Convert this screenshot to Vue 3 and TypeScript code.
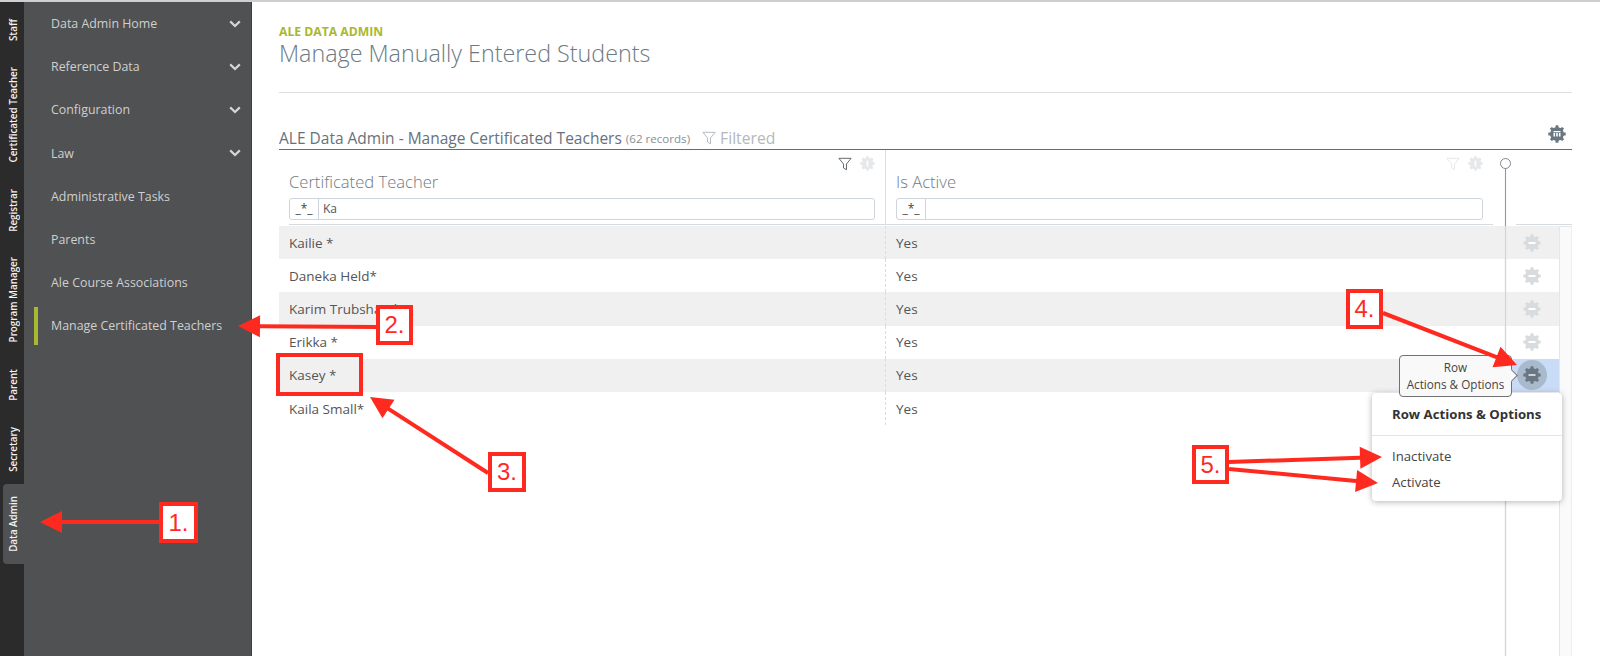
<script setup lang="ts">
const railItems = ['Staff', 'Certificated Teacher', 'Registrar', 'Program Manager', 'Parent', 'Secretary', 'Data Admin']
const navItems = [
  { label: 'Data Admin Home', more: true },
  { label: 'Reference Data', more: true },
  { label: 'Configuration', more: true },
  { label: 'Law', more: true },
  { label: 'Administrative Tasks', more: false },
  { label: 'Parents', more: false },
  { label: 'Ale Course Associations', more: false },
  { label: 'Manage Certificated Teachers', more: false, current: true },
]
const rows = [
  { name: 'Kailie *', active: 'Yes' },
  { name: 'Daneka Held*', active: 'Yes' },
  { name: 'Karim Trubshaw*', active: 'Yes' },
  { name: 'Erikka *', active: 'Yes' },
  { name: 'Kasey *', active: 'Yes', selected: true },
  { name: 'Kaila Small*', active: 'Yes' },
]

function makeGear(): string {
  const pts: string[] = []
  const teeth = 8
  for (let i = 0; i < teeth; i++) {
    const a = (i / teeth) * Math.PI * 2
    const step = (Math.PI * 2) / teeth
    const list: [number, number][] = [
      [6.8, a - step * 0.5],
      [7, a - step * 0.28],
      [8.8, a - step * 0.2],
      [8.8, a + step * 0.2],
      [7, a + step * 0.28],
    ]
    for (const [r, t] of list) {
      pts.push(`${(9 + r * Math.sin(t)).toFixed(2)} ${(9 - r * Math.cos(t)).toFixed(2)}`)
    }
  }
  return 'M' + pts.join('L') + 'Z'
}
const gearD = makeGear()

function arrow(x1: number, y1: number, x2: number, y2: number, w = 4, hl = 22, hw = 11): string {
  const len = Math.hypot(x2 - x1, y2 - y1)
  const ux = (x2 - x1) / len
  const uy = (y2 - y1) / len
  const px = -uy
  const py = ux
  const bx = x2 - ux * hl
  const by = y2 - uy * hl
  const p = (x: number, y: number) => `${x.toFixed(1)},${y.toFixed(1)}`
  return [
    p(x1 + (px * w) / 2, y1 + (py * w) / 2),
    p(bx + (px * w) / 2, by + (py * w) / 2),
    p(bx + px * hw, by + py * hw),
    p(x2, y2),
    p(bx - px * hw, by - py * hw),
    p(bx - (px * w) / 2, by - (py * w) / 2),
    p(x1 - (px * w) / 2, y1 - (py * w) / 2),
  ].join(' ')
}
const arrows = [
  arrow(160, 522, 40, 522),
  arrow(377, 327, 238, 326),
  arrow(488, 473, 370, 397),
  arrow(1383, 313, 1517, 365),
  arrow(1229, 462, 1382, 457),
  arrow(1229, 469, 1378, 483),
]
</script>

<template>
  <div class="page">
    <nav class="rail">
      <div v-for="item in railItems" :key="item" class="rail-item" :class="{ on: item === 'Data Admin' }">
        <span>{{ item }}</span>
      </div>
    </nav>

    <aside class="side">
      <div v-for="item in navItems" :key="item.label" class="nav-item" :class="{ current: item.current }">
        <span>{{ item.label }}</span>
        <svg v-if="item.more" class="chev" viewBox="0 0 12 8"><path d="M1.200 1.400 6 6l4.800-4.600" /></svg>
      </div>
    </aside>

    <main class="main">
      <header class="head">
        <div class="eyebrow">ALE DATA ADMIN</div>
        <h1>Manage Manually Entered Students</h1>
      </header>

      <div class="section-title">
        <span class="st-name">ALE Data Admin - Manage Certificated Teachers</span>
        <span class="st-count">(62 records)</span>
        <svg class="funnel st-funnel" viewBox="0 0 16 16"><path d="M1 1.500h14L9.700 8v6.600L6.300 12.600V8z" /></svg>
        <span class="st-filter">Filtered</span>
        <svg class="gear gear-dark st-gear" viewBox="0 0 18 18">
          <path :d="gearD" />
          <path class="mark" d="M5.500 6h7v1.200h-7zM5.500 8h1.600v3.500H5.500zM8.200 8h1.600v3.500H8.200zM10.900 8h1.600v3.500h-1.600z" />
        </svg>
      </div>

      <div class="col-head">
        <div class="hcell first">
          <div class="tools">
            <svg class="funnel dark" viewBox="0 0 16 16"><path d="M1 1.500h14L9.700 8v6.600L6.300 12.600V8z" /></svg>
            <svg class="gear gear-faint" viewBox="0 0 18 18"><path :d="gearD" /><rect class="mark" x="8" y="5.500" width="2" height="7" /></svg>
          </div>
          <div class="hlabel">Certificated Teacher</div>
          <div class="filter-box"><span class="prefix">_*_</span><span class="fval">Ka</span></div>
        </div>
        <div class="hcell second">
          <div class="tools">
            <svg class="funnel pale" viewBox="0 0 16 16"><path d="M1 1.500h14L9.700 8v6.600L6.300 12.600V8z" /></svg>
            <svg class="gear gear-faint" viewBox="0 0 18 18"><path :d="gearD" /><rect class="mark" x="8" y="5.500" width="2" height="7" /></svg>
          </div>
          <div class="hlabel">Is Active</div>
          <div class="filter-box"><span class="prefix">_*_</span><span class="fval"></span></div>
        </div>
        <div class="hcell third"></div>
      </div>

      <div class="body">
        <div class="rows">
          <div v-for="(row, i) in rows" :key="row.name" class="row" :class="{ odd: i % 2 === 0 }">
            <div class="cell c1">{{ row.name }}</div>
            <div class="cell c2">{{ row.active }}</div>
            <div class="cell c3" :class="{ sel: row.selected }">
              <span class="gear-wrap" :class="{ ring: row.selected }">
                <svg class="gear" :class="row.selected ? 'gear-dark' : 'gear-light'" viewBox="0 0 18 18">
                  <path :d="gearD" />
                  <rect class="mark" x="5.500" y="8" width="7" height="2" />
                </svg>
              </span>
            </div>
          </div>
        </div>
        <div class="scroll"></div>
      </div>

      <div class="freeze"><span class="knob"></span></div>

      <div class="menu">
        <div class="menu-title">Row Actions &amp; Options</div>
        <div class="menu-item first-item">Inactivate</div>
        <div class="menu-item">Activate</div>
      </div>
      <div class="tooltip">Row<br />Actions &amp; Options</div>
    </main>

    <svg class="marks" viewBox="0 0 1600 656">
      <polygon v-for="(pts, i) in arrows" :key="i" :points="pts" />
    </svg>
    <div class="hilite"></div>
    <div class="tag t1">1.</div>
    <div class="tag t2">2.</div>
    <div class="tag t3">3.</div>
    <div class="tag t4">4.</div>
    <div class="tag t5">5.</div>
  </div>
</template>

<style>
html, body { margin: 0; background: #fff; }
</style>

<style scoped>
.page {
  position: relative;
  display: flex;
  width: 1600px;
  height: 656px;
  overflow: hidden;
  background: #fff;
  border-top: 2px solid #cfcfcf;
  box-sizing: border-box;
  font-family: "Open Sans", "Liberation Sans", sans-serif;
}

.rail {
  width: 24px;
  flex: none;
  background: #2b2b2b;
  padding-top: 4px;
  box-sizing: border-box;
  display: flex;
  flex-direction: column;
  align-items: flex-end;
}
.rail-item {
  width: 21px;
  padding: 13px 0;
  display: flex;
  justify-content: center;
  font-size: 9.800px;
  font-weight: 600;
  line-height: 14px;
  color: #f2f2f2;
}
.rail-item span {
  writing-mode: vertical-rl;
  transform: rotate(180deg);
  white-space: nowrap;
}
.rail-item.on {
  background: #505153;
  border-radius: 4px 0 0 4px;
  padding: 12px 0;
}

.side {
  width: 228px;
  flex: none;
  background: #505153;
  border-right: 1px solid #3d3e40;
  box-sizing: border-box;
}
.nav-item {
  position: relative;
  height: 43.200px;
  padding: 0 10px 0 27px;
  display: flex;
  align-items: center;
  justify-content: space-between;
  font-size: 12.400px;
  color: #cfcfcf;
}
.nav-item.current::before {
  content: "";
  position: absolute;
  left: 10px;
  top: 3px;
  bottom: 3px;
  width: 4px;
  background: #a9b82f;
}
.chev { width: 12px; height: 8px; fill: none; stroke: #d6d6d6; stroke-width: 2.200; }

.main {
  position: relative;
  flex: 1;
  min-width: 0;
  padding: 0 28px 0 27px;
  display: flex;
  flex-direction: column;
}
.head {
  height: 91px;
  padding-top: 23px;
  box-sizing: border-box;
  border-bottom: 1px solid #dedede;
}
.eyebrow {
  font-size: 12.200px;
  font-weight: 700;
  line-height: 14px;
  color: #a9b82f;
}
h1 {
  margin: 0;
  font-size: 23.300px;
  font-weight: 300;
  line-height: 28px;
  color: #6b7a83;
}
.section-title {
  margin-top: 34px;
  height: 22px;
  display: flex;
  align-items: center;
  border-bottom: 1px solid #6a6a6a;
  color: #66727b;
}
.st-name { font-size: 15.500px; white-space: nowrap; }
.st-count { font-size: 11.600px; color: #8a8f93; margin-left: 4px; }
.st-filter { font-size: 15.700px; color: #b4b8bb; margin-left: 4px; }
.funnel { width: 14px; height: 14px; fill: #fff; stroke: #b4b8bb; stroke-width: 1.100; }
.funnel.dark { stroke: #5e666c; }
.funnel.pale { stroke: #e4e6e8; }
.st-funnel { margin-left: 12px; }
.gear { width: 18px; height: 18px; display: block; }
.gear .mark { fill: #fff; }
.gear-dark { fill: #6a7783; }
.gear-light { fill: #d9dcde; }
.gear-faint { fill: #e6e8ea; width: 15px; height: 15px; }
.st-gear { margin-left: auto; margin-right: 6px; margin-top: -8px; }

.col-head {
  display: grid;
  grid-template-columns: 607px 619px 1fr;
  height: 75px;
  flex: none;
}
.hcell {
  display: flex;
  flex-direction: column;
  box-sizing: border-box;
  border-bottom: 1px solid #d6dbe0;
}
.hcell.first {
  position: relative;
  padding: 0 10px 0 10px;
  border-right: 1px solid #dcdcdc;
  border-bottom: none;
}
.hcell.first::after {
  content: "";
  position: absolute;
  left: 10px;
  right: 0;
  bottom: 0;
  border-bottom: 1px solid #d6dbe0;
}
.hcell.second { padding: 0 10px 0 10px; margin-right: 12px; }
.hcell.third { margin-left: 11px; }
.tools {
  height: 21px;
  display: flex;
  justify-content: flex-end;
  align-items: flex-end;
  gap: 8px;
}
.hlabel {
  font-size: 16.600px;
  font-weight: 300;
  line-height: 22px;
  color: #6e7a82;
}
.filter-box {
  margin-top: 5px;
  height: 22px;
  box-sizing: border-box;
  border: 1px solid #cfd5dc;
  border-radius: 3px;
  display: flex;
  align-items: stretch;
  font-size: 12px;
  color: #555;
}
.prefix {
  width: 29px;
  flex: none;
  box-sizing: border-box;
  border-right: 1px solid #cfd5dc;
  text-align: center;
  line-height: 20px;
  font-size: 12px;
  color: #444;
}
.fval { padding-left: 4px; line-height: 20px; }

.body {
  flex: 1;
  min-height: 0;
  display: flex;
  margin-top: 1px;
}
.rows { flex: 1; min-width: 0; }
.row {
  display: grid;
  grid-template-columns: 607px 619px 1fr;
  height: 33.200px;
  font-size: 13.500px;
  color: #555;
}
.row.odd { background: #f0f0f0; }
.cell { display: flex; align-items: center; padding-left: 10px; }
.c1 { border-right: 1px dashed #dcdcdc; }
.c3 { padding-left: 0; justify-content: center; }
.c3.sel { background: #c9dcf7; }
.scroll {
  width: 13px;
  flex: none;
  box-sizing: border-box;
  background: #fafafa;
  border-left: 1px solid #e6e6e6;
  border-right: 1px solid #eee;
  border-top: 1px solid #e6e6e6;
}
.gear-wrap { display: flex; align-items: center; justify-content: center; width: 30px; height: 30px; border-radius: 50%; }
.gear-wrap.ring { background: #a9bacd; }
.gear-wrap.ring .mark { fill: #c9d4e0; }

.freeze {
  position: absolute;
  left: 1253px;
  top: 162px;
  bottom: 0;
  width: 1px;
  background: linear-gradient(#8e99a6 0 62px, #d4d4d4 62px);
  box-shadow: 0 0 2px #e2e2e2;
}
.knob {
  position: absolute;
  left: -5px;
  top: -6px;
  width: 11px;
  height: 11px;
  box-sizing: border-box;
  border: 1px solid #7d8896;
  border-radius: 50%;
  background: #fff;
}

.tooltip {
  position: absolute;
  left: 1147px;
  top: 353px;
  width: 113px;
  height: 42px;
  box-sizing: border-box;
  border: 1px solid #6f7172;
  border-radius: 4px;
  background: #f9f9f9;
  font-size: 11.700px;
  line-height: 17px;
  color: #444;
  text-align: center;
  padding-top: 3px;
}
.tooltip::after {
  content: "";
  position: absolute;
  right: -5px;
  top: 15px;
  width: 8px;
  height: 8px;
  background: #f9f9f9;
  border-top: 1px solid #6f7172;
  border-right: 1px solid #6f7172;
  transform: rotate(45deg);
}
.menu {
  position: absolute;
  left: 1120px;
  top: 391px;
  width: 190px;
  height: 108px;
  box-sizing: border-box;
  background: #fff;
  border-radius: 4px;
  box-shadow: 0 1px 6px rgba(0, 0, 0, 0.3);
  color: #444;
}
.menu-title {
  height: 42px;
  line-height: 42px;
  padding-left: 20px;
  font-size: 13.200px;
  font-weight: 700;
  color: #333;
  border-bottom: 1px solid #e4e4e4;
}
.menu-item {
  padding-left: 20px;
  height: 26px;
  line-height: 26px;
  font-size: 13.200px;
}
.first-item { margin-top: 7px; }

.marks { position: absolute; left: 0; top: -2px; width: 1600px; height: 656px; pointer-events: none; }
.marks polygon { fill: #ff2a1f; }
.hilite {
  position: absolute;
  left: 276px;
  top: 351px;
  width: 87px;
  height: 43px;
  box-sizing: border-box;
  border: 4px solid #ff2a1f;
}
.tag {
  position: absolute;
  box-sizing: border-box;
  border: 4px solid #ff2a1f;
  background: #fff;
  color: #ff2a1f;
  font-family: "Liberation Sans", Arial, sans-serif;
  font-size: 24px;
  display: flex;
  align-items: center;
  justify-content: center;
}
.t1 { left: 159px; top: 500px; width: 39px; height: 41px; }
.t2 { left: 376px; top: 303px; width: 37px; height: 40px; }
.t3 { left: 488px; top: 450px; width: 38px; height: 40px; }
.t4 { left: 1346px; top: 287px; width: 37px; height: 40px; }
.t5 { left: 1192px; top: 443px; width: 37px; height: 39px; }
</style>
